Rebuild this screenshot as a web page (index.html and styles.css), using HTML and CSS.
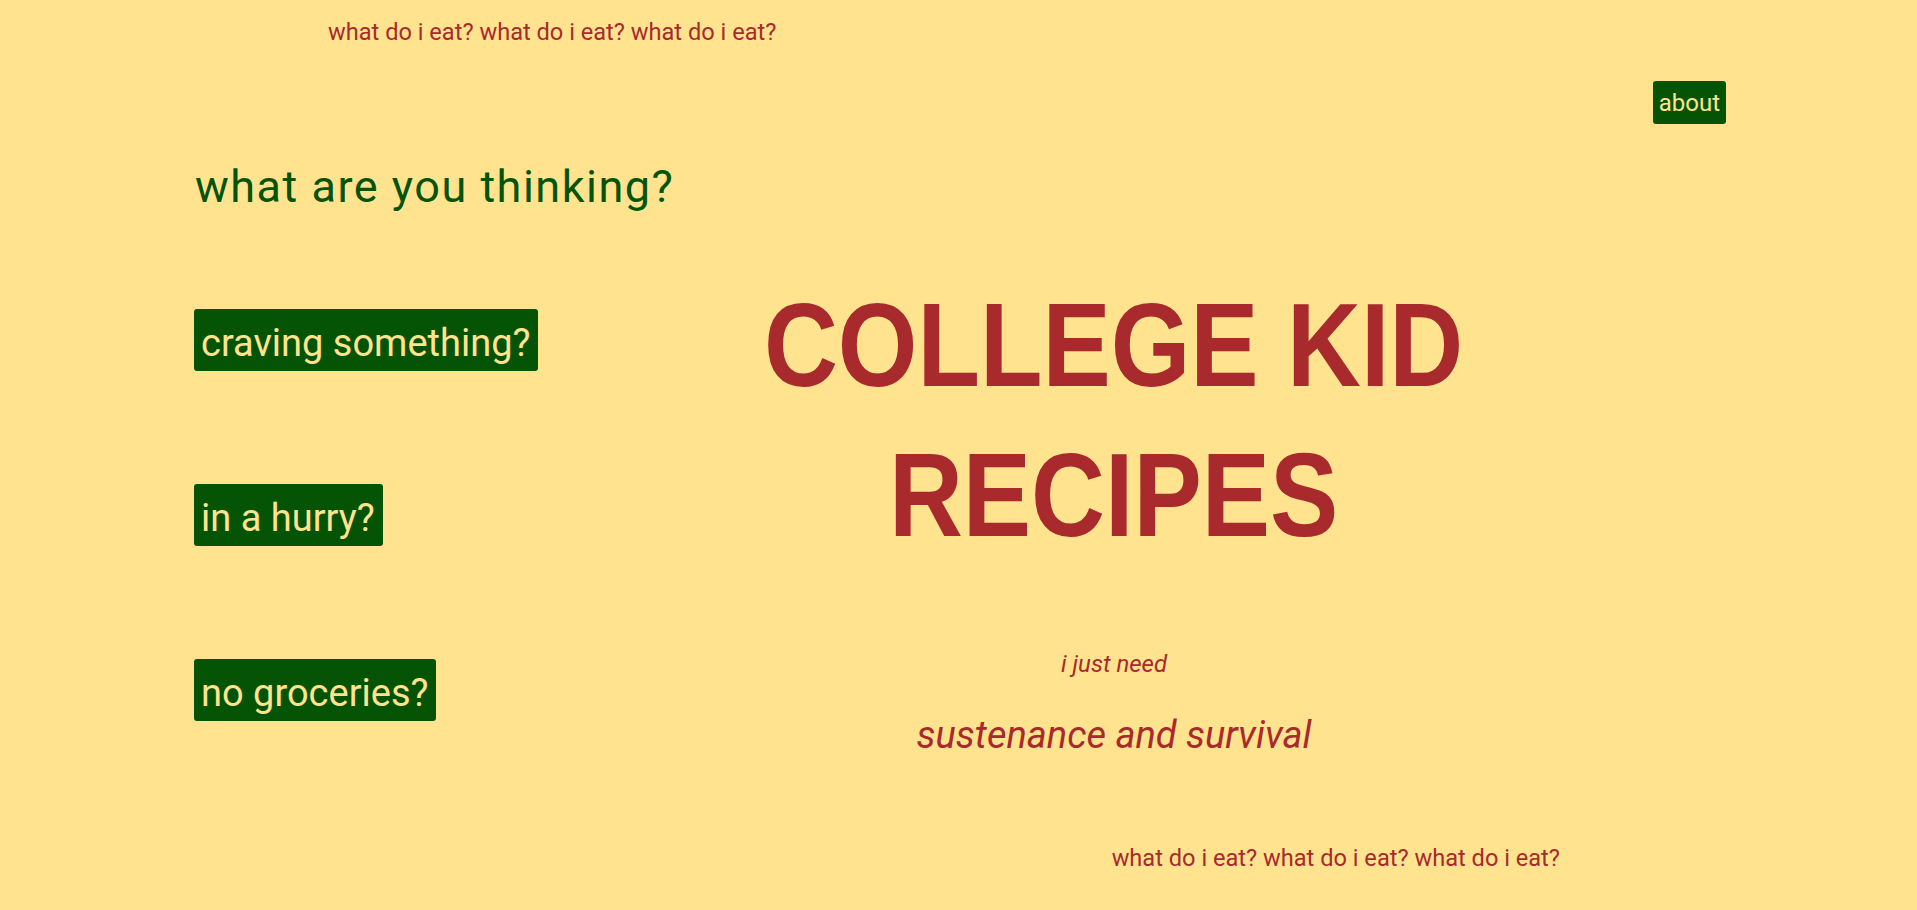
FILE: index.html
```html
<!DOCTYPE html>
<html lang="en">
<head>
<meta charset="utf-8">
<title>College Kid Recipes</title>
<link rel="stylesheet" href="styles.css">
</head>
<body>
  <div class="ticker ticker-top">what do i eat? what do i eat? what do i eat?</div>
  <nav class="nav">
    <a class="btn btn-about" href="#">about</a>
  </nav>
  <main class="main">
    <section class="left">
      <h2 class="question">what are you thinking?</h2>
      <div class="choices">
        <a class="btn btn-choice" href="#">craving something?</a>
        <a class="btn btn-choice" href="#">in a hurry?</a>
        <a class="btn btn-choice" href="#">no groceries?</a>
      </div>
    </section>
    <section class="right">
      <h1 class="title">COLLEGE KID<br>RECIPES</h1>
      <p class="need">i just need</p>
      <p class="survival">sustenance and survival</p>
    </section>
  </main>
  <div class="ticker ticker-bottom">what do i eat? what do i eat? what do i eat?</div>
</body>
</html>
```

FILE: styles.css
```css
html, body {
  margin: 0;
  padding: 0;
}
body {
  background: #ffe38e;
  font-family: Roboto, "Open Sans", sans-serif;
  width: 1917px;
  height: 910px;
  overflow: hidden;
  display: flex;
  flex-direction: column;
}
.ticker {
  color: #a92a2d;
  font-size: 23.6px;
  line-height: 30px;
  white-space: nowrap;
}
.ticker-top {
  padding-top: 17px;
  padding-left: 328px;
}
.ticker-bottom {
  margin-top: 86px;
  align-self: flex-end;
  padding-right: 357px;
}
.nav {
  display: flex;
  justify-content: flex-end;
  padding-right: 191px;
  margin-top: 34px;
}
.btn {
  background: #055305;
  color: #ffe38e;
  text-decoration: none;
  border-radius: 3px;
  display: inline-flex;
  align-items: center;
  box-sizing: border-box;
}
.btn-about {
  height: 43px;
  padding: 1px 6px 0;
  font-size: 24px;
}
.main {
  display: grid;
  grid-template-columns: 600px 640px;
  padding-left: 194px;
}
.left {
  display: flex;
  flex-direction: column;
}
.question {
  margin: 38px 0 0 1px;
  font-weight: 400;
  font-size: 45px;
  line-height: 50px;
  letter-spacing: 1.5px;
  color: #055305;
}
.choices {
  margin-top: 97px;
  display: flex;
  flex-direction: column;
  align-items: flex-start;
  gap: 113px;
}
.btn-choice {
  height: 62px;
  padding: 5px 8px 0 7px;
  font-size: 38px;
}
.right {
  display: flex;
  flex-direction: column;
  align-items: center;
  text-align: center;
  color: #a92a2d;
}
.title {
  margin: 146px 0 0;
  font-family: "Liberation Sans", Arial, sans-serif;
  font-weight: 700;
  font-size: 119px;
  line-height: 150px;
  white-space: nowrap;
  transform: scaleX(0.86);
}
.need {
  margin: 79px 0 0;
  font-style: italic;
  font-size: 24px;
  line-height: 30px;
}
.survival {
  margin: 34px 0 0;
  font-style: italic;
  font-size: 38px;
  line-height: 44px;
}
```
